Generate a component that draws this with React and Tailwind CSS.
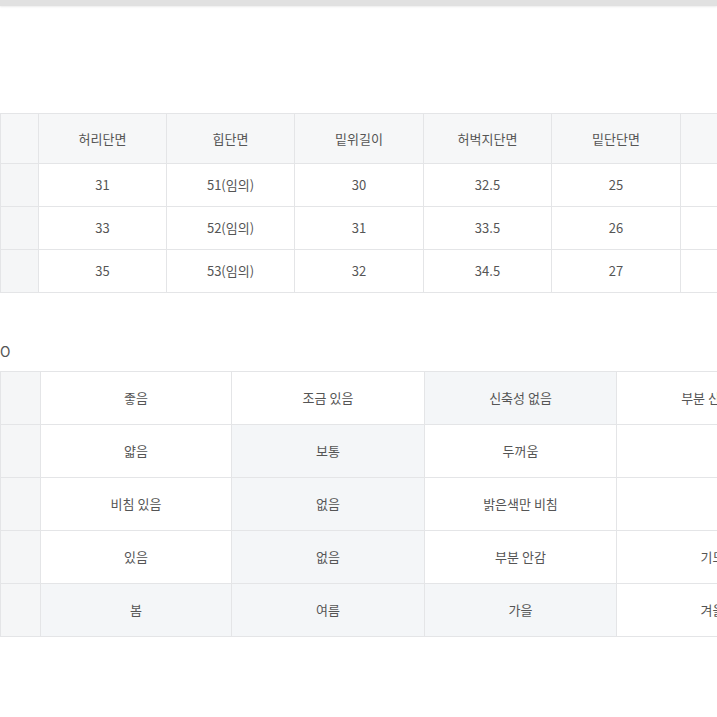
const sizeHead = ['', '허리단면', '힙단면', '밑위길이', '허벅지단면', '밑단단면', '']
const sizeRows = [
  ['', '31', '51(임의)', '30', '32.5', '25', ''],
  ['', '33', '52(임의)', '31', '33.5', '26', ''],
  ['', '35', '53(임의)', '32', '34.5', '27', ''],
]
const sizeCols = ['w-[38px]', 'w-[128px]', 'w-[128px]', 'w-[129px]', 'w-[128px]', 'w-[129px]', 'w-[128px]']

// [text, selected]
const infoRows = [
  [['좋음', false], ['조금 있음', false], ['신축성 없음', true], ['부분 신축성', false]],
  [['얇음', false], ['보통', true], ['두꺼움', false], ['', false]],
  [['비침 있음', false], ['없음', true], ['밝은색만 비침', false], ['', false]],
  [['있음', false], ['없음', true], ['부분 안감', false], ['기모', false]],
  [['봄', true], ['여름', true], ['가을', true], ['겨울', false]],
]
const infoCols = ['w-[40px]', 'w-[191px]', 'w-[193px]', 'w-[192px]', 'w-[192px]']

export default function App() {
  return (
    <div
      className="w-[717px] h-[717px] overflow-hidden bg-white text-[#555] text-[13px]"
      style={{ fontFamily: "'Noto Sans CJK KR', 'Noto Sans', sans-serif" }}
    >
      {/* top strip */}
      <div className="h-[6px] bg-[#e1e1e1] shadow-[0_1px_2px_rgba(0,0,0,0.08)]" />

      {/* size table */}
      <table className="mt-[107px] table-fixed border-collapse w-[808px] min-w-[808px]">
        <colgroup>
          {sizeCols.map((c, i) => <col key={i} className={c} />)}
        </colgroup>
        <thead>
          <tr className="h-[50px] bg-[#f6f7f8]">
            {sizeHead.map((h, i) => (
              <th key={i} className="border border-[#e4e5e7] font-normal text-center p-0">{h}</th>
            ))}
          </tr>
        </thead>
        <tbody>
          {sizeRows.map((r, ri) => (
            <tr key={ri} className="h-[43px]">
              {r.map((v, i) => (
                <td
                  key={i}
                  className={`border border-[#e4e5e7] text-center p-0 ${i === 0 ? 'bg-[#f5f6f7]' : 'bg-white'}`}
                >
                  {v}
                </td>
              ))}
            </tr>
          ))}
        </tbody>
      </table>

      <div className="mt-[48px] h-[30px] text-[14px] leading-[20px]">O</div>

      {/* info table */}
      <table className="table-fixed border-collapse w-[808px] min-w-[808px]">
        <colgroup>
          {infoCols.map((c, i) => <col key={i} className={c} />)}
        </colgroup>
        <tbody>
          {infoRows.map((r, ri) => (
            <tr key={ri} className="h-[53px]">
              <td className="border border-[#e4e5e7] bg-[#f5f6f7] p-0" />
              {r.map(([v, sel], i) => (
                <td
                  key={i}
                  className={`border border-[#e4e5e7] text-center p-0 whitespace-nowrap ${sel ? 'bg-[#f4f6f8]' : 'bg-white'}`}
                >
                  {v}
                </td>
              ))}
            </tr>
          ))}
        </tbody>
      </table>
    </div>
  )
}
